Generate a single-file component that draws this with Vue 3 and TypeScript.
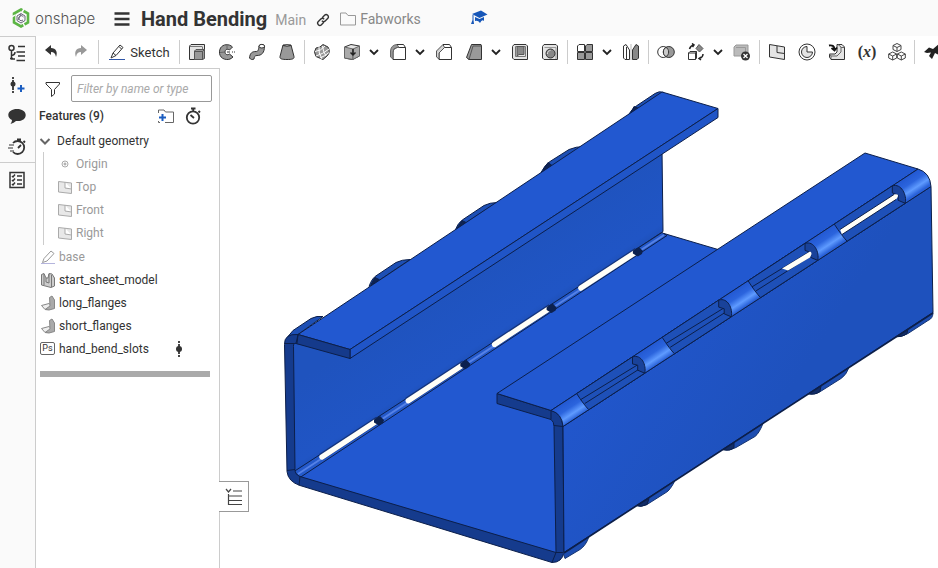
<script setup lang="ts">
import { ref } from 'vue'

interface Shape { d: string; f?: string; s?: string; w?: number }
type IconName = string

const K = '#333'
const G = '#999'
const L = '#e4e4e4'

const icons: Record<IconName, Shape[]> = {
  undo: [{ d: 'M3 7L9 2V5C14 5 16 9 14 14C13.500 10.500 12 9 9 9V12Z', f: K }],
  redo: [{ d: 'M15 7L9 2V5C4 5 2 9 4 14C4.500 10.500 6 9 9 9V12Z', f: G }],
  pencil: [
    { d: 'M3 15L5 10L12 2L15 4.500L8 12.500ZM5 10L8 12.500M11 3.500L13.500 6', s: K },
    { d: 'M1 16.500H17', s: '#2f56a8' },
  ],
  extrude: [
    { d: 'M1.500 3L3 1.500H16.500V15L15 16.500H1.500Z', f: L, s: K },
    { d: 'M1.500 3.500H14M14.500 3.500V6', s: '#777' },
    { d: 'M6.500 8L8 6.500H16.500V15L15 16.500H6.500Z', f: G, s: '#555' },
    { d: 'M6.500 8.500H14.500V16.500M14.500 8.500L16.500 6.500', s: '#555' },
  ],
  revolve: [
    { d: 'M14.500 4C11 .5 5 1 2.500 5C0 10 2 16 8.500 16.500C11 16.700 13 16 15 14L11.500 11C9.500 12.500 7 11.500 7 9C7 6.500 9.500 5.500 11.500 7Z', f: G, s: K },
    { d: 'M9 2L9 6M2 9.500L7 9', s: '#666' },
    { d: 'M9 9H12M14 9H15M16 9H17', s: K },
  ],
  sweep: [
    { d: 'M1.500 15C2 10 4 8.500 8 8.500C10 8.500 10.500 7.500 11 3C12 1 15 1 16.500 3C16.500 10 13.500 12.500 9 12.500C6.500 12.500 6.500 14 6 16C4.500 17 2.500 16.500 1.500 15Z', f: G, s: K },
    { d: 'M11 3.200A2.800 1.800 0 1 0 16.600 3.200A2.800 1.800 0 1 0 11 3.200', f: '#fff', s: K },
  ],
  loft: [
    { d: 'M5 2L2 13.500C1.500 16 4 16.500 9 16.500S16.500 16 16 13.500L13 2Z', f: G, s: K },
    { d: 'M5 2.500Q9 4 13 2.500Q9 1 5 2.500', f: '#fff', s: K },
  ],
  thicken: [
    { d: 'M3 5Q7 5 10 1.500L15 4Q18 9 14 13L10 16.500L3 13.500Q0 9 3 5Z', f: G, s: K },
    { d: 'M2 8.500Q8 8 12 3M3 13Q10 11 16 6M7 15Q12 13 16 9.500M6 4Q5 10 9 16M9.500 3Q10 9 13 13', s: '#fff', w: 1 },
  ],
  box: [
    { d: 'M1.500 4L8 1.500L16.500 3V13L9 16.500L1.500 15Z', f: L, s: K },
    { d: 'M1.500 4L10 6V16.500L1.500 15Z', f: '#aaa', s: '#666' },
    { d: 'M10 6L16.500 3V13L10 16.500Z', f: '#aaa', s: '#666' },
    { d: 'M10 6V12M7.500 9.500L10 12L12.500 9.500', s: '#222', w: 1.500 },
  ],
  fillet: [
    { d: 'M4 16.500V9Q4 5 8 4.500H16.500V16.500Z', f: '#fff', s: K },
    { d: 'M1.500 14V8Q2 2 8 1.500L10 4.500H8Q4 5 4 9V16Z', f: G, s: '#666' },
    { d: 'M8 1.500H14.500L16.500 4.500', s: K },
  ],
  chamfer: [
    { d: 'M4 16.500V10L9 4.500H16.500V16.500Z', f: '#fff', s: K },
    { d: 'M1.500 14V8L8 1.500L9.500 4.500L4 10V16Z', f: '#d5d5d5', s: '#555' },
    { d: 'M8 1.500H14.500L16.500 4.500', s: K },
  ],
  draft: [
    { d: 'M1.500 14.500L6.500 1.500H16L16.500 3V16.500H4Z', f: G, s: K },
    { d: 'M1.500 14.500L4 16.500L8 3H16.500', s: '#555' },
  ],
  shell: [
    { d: 'M1.500 3.500L3 1.500H15L16.500 3V16.500H3L1.500 15Z', f: L, s: K },
    { d: 'M4.500 3.500V13.500H14.500V3.500Z', s: '#777' },
    { d: 'M6 3.500H13V11.500H8L6 13Z', f: '#888', s: '#555' },
  ],
  hole: [
    { d: 'M1.500 3.500L3 1.500H15L16.500 3V16.500H3L1.500 15Z', f: L, s: K },
    { d: 'M3.500 4.500H15V16', s: '#999' },
    { d: 'M5 10.500A4.500 4.500 0 1 0 14 10.500A4.500 4.500 0 1 0 5 10.500', f: '#888', s: K },
    { d: 'M6.500 11A3 3 0 0 1 9.500 7.500', s: '#ddd' },
  ],
  pattern: [
    { d: 'M1.500 3L3 1.500H8.500V8.500H1.500Z', f: '#fff', s: K },
    { d: 'M9.500 3L11 1.500H16.500V8.500H9.500ZM1.500 9.500H8.500V16.500H1.500ZM9.500 9.500H16.500V16.500H9.500Z', f: G, s: K },
  ],
  mirror: [
    { d: 'M1.500 3L4 1.500L7.500 7V16.500H3L1.500 15Z', f: '#fff', s: K },
    { d: 'M4.500 4V16', s: K },
    { d: 'M16.500 3L14 1.500L10.500 7V16.500H15L16.500 15Z', f: '#888', s: K },
    { d: 'M9 1V17', s: '#bbb' },
  ],
  boolean: [
    { d: 'M.7 9A5.500 5.500 0 1 0 11.700 9A5.500 5.500 0 1 0 .7 9', f: '#fff', s: K },
    { d: 'M6.300 9A5.500 5.500 0 1 0 17.300 9A5.500 5.500 0 1 0 6.300 9', f: G, s: K },
    { d: 'M9 4.300A5.500 5.500 0 0 1 9 13.700A5.500 5.500 0 0 1 9 4.300', f: '#ccc', s: K },
  ],
  transform: [
    { d: 'M1.500 10L3 8.500H9.500V15L8.500 16.500H1.500ZM1.500 10H8.500V16.500M8.500 10L9.500 8.500', f: '#fff', s: K },
    { d: 'M12 1.500L16 5.500L12.500 9L9 5.500Z', f: '#888', s: '#555' },
    { d: 'M2.500 6Q3.500 2.500 7 2M5 .5L7 2L5.500 4M16 11Q16 14.500 12 15.500M14 14L12 15.500L14 17', s: '#222', w: 1.500 },
  ],
  remove: [
    { d: 'M1 4L3 2H15V13H1Z', f: '#bbb', s: G },
    { d: 'M3 4.500H12.500V13', s: '#999' },
    { d: 'M8 13A4.500 4.500 0 1 0 17 13A4.500 4.500 0 1 0 8 13', f: K },
    { d: 'M10.500 11L14.500 15M14.500 11L10.500 15', s: '#fff', w: 1.300 },
  ],
  plane: [
    { d: 'M1.500 1.500L16.500 4V16.500L1.500 14Z', f: L, s: K },
    { d: 'M9 3V9.500L16.500 10.500', s: K },
  ],
  helix: [
    { d: 'M1 9A8 8 0 1 0 17 9A8 8 0 1 0 1 9', f: '#fff', s: K },
    { d: 'M3.500 9A5.500 5.500 0 0 1 9 3.500V9H14.500A5.500 5.500 0 0 1 3.500 9', f: L, s: K },
  ],
  derive: [
    { d: 'M9 1.500H14L16.500 4V16.500H3L1.500 14V11H7L9 9Z', f: L, s: K },
    { d: 'M1.500 11L3 13H9L13 9V4L10 1.500M13 4.500H16.500M3 13V16', s: '#666' },
    { d: 'M1 2.500Q6 1.500 6.500 6M3.500 5L6.500 7.500L9 4.500', s: '#111', w: 1.800 },
  ],
  cubes: [
    { d: 'M9 .5L13 2.500V6.500L9 8.500L5 6.500V2.500ZM5 2.500L9 4.500L13 2.500M9 4.500V8.500', f: '#fff', s: '#444' },
    { d: 'M4.700 9L8.700 11V15L4.700 17L.7 15V11ZM.7 11L4.700 13L8.700 11M4.700 13V17', f: '#fff', s: '#444' },
    { d: 'M13.300 9L17.300 11V15L13.300 17L9.300 15V11ZM9.300 11L13.300 13L17.300 11M13.300 13V17', f: '#fff', s: '#444' },
  ],
  flange: [{ d: 'M1 9L6 4.500L10 6L16 1V8L18 10V13L12 10L9 16L6 13L8 9.500L4 10Z', f: '#222' }],
  tree: [
    { d: 'M1 4A2.500 2.500 0 1 0 6 4A2.500 2.500 0 1 0 1 4M3.500 7V15H7M3.500 11.500Q7 11 7 8M2 14.500H5', s: K, w: 1.500 },
    { d: 'M10 2.500H17M8.500 8H17M10 12H17M8.500 16.500H17', s: K, w: 1.600 },
  ],
  addStep: [
    { d: 'M5 1V3M5 4V14M5 15V17', s: K, w: 1.800 },
    { d: 'M2.500 8A2.500 2.500 0 1 0 7.500 8A2.500 2.500 0 1 0 2.500 8', f: K },
    { d: 'M13 9V16M9.500 12.500H16.500', s: '#1b5dc0', w: 2 },
  ],
  comment: [{ d: 'M9 2C4 2 .3 4.500 .3 8C.3 10.500 2 12 4 13Q4 15 2.500 17Q6 16 8 14C14 14.500 17.700 12 17.700 8C17.700 4.500 14 2 9 2Z', f: K }],
  watch: [
    { d: 'M5 5A6.500 6.500 0 1 1 5 14M9 1.500H13M11 2V4M15.500 3L17 4.500M10 10L13 7', s: K, w: 1.800 },
    { d: 'M1 7H6M0 10H5M2 13H6', s: K },
  ],
  checklist: [
    { d: 'M2 1.500H16V16.500H2Z', s: K, w: 1.500 },
    { d: 'M9 5H14M9 9H14M9 13H14M4 5L5 6L7 3.500M4 9L5 10L7 7.500M4 13L5 14L7 11.500', s: K, w: 1.500 },
  ],
  funnel: [{ d: 'M2 2.500H15.500V4L10.500 9.500V14L7.500 16.500V9.500L2 4Z', s: K }],
  addFolder: [
    { d: 'M1.500 6V3H7L8.500 5H16.500V15.500H8M1.500 14V15.500H3', s: '#666' },
    { d: 'M5.500 7V14M2 10.500H9', s: '#1b5dc0', w: 2 },
  ],
  timer: [{ d: 'M2.800 10.500A6.200 6.200 0 1 0 15.200 10.500A6.200 6.200 0 1 0 2.800 10.500M7 1.500H11.500M9.200 2V4M6.500 8L10 11M14.500 4L16 5.500', s: K, w: 1.800 }],
  chevron: [{ d: 'M5 7L9 11L13 7', s: '#222', w: 1.800 }],
  origin: [
    { d: 'M6 9A3 3 0 1 0 12 9A3 3 0 1 0 6 9', s: '#aaa' },
    { d: 'M7.500 9H10.500M9 7.500V10.500', s: G },
  ],
  datum: [{ d: 'M2.500 3.500L15.500 5V15.500L2.500 14ZM9 4V10L15.500 11', f: '#e8e8e8', s: '#aaa' }],
  sketchItem: [
    { d: 'M3.500 14.500L5 10.500L12 3L15 5.500L8 13Z', s: G },
    { d: 'M2 15.500H16', s: '#b5b5dd' },
  ],
  sheet: [
    { d: 'M2.500 3.500L5 2.500L7 7H9L10 2.500L13 3L15.500 7V15L12 16.500L2.500 14Z', f: '#ccc', s: '#777' },
    { d: 'M5 3V14M7 7V11L10 12V3M12.500 4V16', s: '#777' },
  ],
  bend: [
    { d: 'M2.500 11.500L10 9.500L14 13L9 15.500H6Z', f: '#eee', s: '#888' },
    { d: 'M10.500 3.500L13 2L15.500 6V14.500L10 16L6 15.500L11 12Z', f: '#aaa', s: '#888' },
  ],
  commit: [
    { d: 'M9 1V3M9 4V14M9 15V17', s: K, w: 1.800 },
    { d: 'M6 9A3 3 0 1 0 12 9A3 3 0 1 0 6 9', f: K },
  ],
  link: [{ d: 'M8 6L11 3Q13 1 15 3Q17 5 15 7L11.500 10.500Q9.500 12 7.500 10M10 12L7 15Q5 17 3 15Q1 13 3 11L6.500 7.500Q8.500 6 10.500 8', s: K, w: 1.800 }],
  folder: [{ d: 'M1.500 15V3H7L9 5.500H16.500V15Z', s: G }],
  cap: [
    { d: 'M2 5L11 1.500L17.500 5.500L9.500 9Z', f: '#1656b8' },
    { d: 'M5 8L9.500 10L14 8V12Q12 10 10 14Q8 11 5 12ZM2.500 6V11L1 15H4L3.500 11V6Z', f: '#1656b8' },
  ],
  listTab: [{ d: 'M1 1L3.500 4L6 1M3.500 6V17M4 8H17M4 12.500H17M4 16.500H17M8 3H17', s: '#444', w: 1.200 }],
  menu: [{ d: 'M1.500 3.500H16.500M1.500 9H16.500M1.500 14.500H16.500', s: K, w: 2.600 }],
}

interface Tool { icon: IconName; label: string; menu?: boolean }
const toolGroups: Tool[][] = [
  [
    { icon: 'extrude', label: 'Extrude' },
    { icon: 'revolve', label: 'Revolve' },
    { icon: 'sweep', label: 'Sweep' },
    { icon: 'loft', label: 'Loft' },
  ],
  [
    { icon: 'thicken', label: 'Thicken' },
    { icon: 'box', label: 'Enclose', menu: true },
    { icon: 'fillet', label: 'Fillet', menu: true },
    { icon: 'chamfer', label: 'Chamfer' },
    { icon: 'draft', label: 'Draft', menu: true },
    { icon: 'shell', label: 'Shell' },
    { icon: 'hole', label: 'Hole' },
  ],
  [
    { icon: 'pattern', label: 'Pattern', menu: true },
    { icon: 'mirror', label: 'Mirror' },
  ],
  [
    { icon: 'boolean', label: 'Boolean' },
    { icon: 'transform', label: 'Transform', menu: true },
    { icon: 'remove', label: 'Delete part' },
  ],
  [
    { icon: 'plane', label: 'Plane' },
    { icon: 'helix', label: 'Helix' },
    { icon: 'derive', label: 'Derived' },
    { icon: 'variable', label: 'Variable' },
    { icon: 'cubes', label: 'Composite part' },
  ],
  [{ icon: 'flange', label: 'Custom feature' }],
]

const rail: Tool[] = [
  { icon: 'tree', label: 'Feature list' },
  { icon: 'addStep', label: 'Versions and history' },
  { icon: 'comment', label: 'Comments' },
  { icon: 'watch', label: 'Performance' },
  { icon: 'checklist', label: 'Tasks' },
]

const defaults = [
  { icon: 'origin', name: 'Origin' },
  { icon: 'datum', name: 'Top' },
  { icon: 'datum', name: 'Front' },
  { icon: 'datum', name: 'Right' },
]
const features = [
  { icon: 'sketchItem', name: 'base', muted: true },
  { icon: 'sheet', name: 'start_sheet_model' },
  { icon: 'bend', name: 'long_flanges' },
  { icon: 'bend', name: 'short_flanges' },
  { icon: 'ps', name: 'hand_bend_slots', commit: true },
]
const open = ref(true)
const query = ref('')

/* Points on the two long edges of the outer bend, t running front to back. */
const top = (t: number) => [551 + 367 * t, 411 - 241.5 * t]
const low = (t: number) => [563 + 368 * t, 427 - 240 * t]
const p = (a: number[]) => `${a[0].toFixed(1)} ${a[1].toFixed(1)}`
const slots = [[0.07, 0.222], [0.303, 0.457], [0.537, 0.692], [0.772, 0.93]].map(([a, b], i) => {
  const s = top(a), e = top(b), f = low(b), g = low(a)
  return {
    body: `M${p(s)}L${p(e)}L${p(f)}L${p(g)}Q${p([g[0] - 5, g[1] - 5])} ${p(s)}Z`,
    lines: i === 3 ? '' : `M${p([s[0] + 4, s[1] + 6])}L${p([e[0] + 5, e[1] + 8])}M${p([s[0] + 8, s[1] + 10])}L${p([e[0] + 7, e[1] + 12])}`,
    cap: `M${p(e)}C${p([e[0] + 9, e[1] - 3])} ${p([f[0] + 2, f[1] - 8])} ${p(f)}L${p([f[0] - 7, f[1] - 3])}L${p([f[0] - 7, f[1] - 8])}L${p([e[0], e[1] + 7])}Z`,
  }
})

const innerSlots = [0, 1, 2, 3].map((i) => ({ x: 321 + 86.3 * i, y: 457.5 - 56.3 * i }))
const upperBumps = [
  'M288 337L293 331L311 319Q317 316 323 317L298 335Z',
  'M369 287Q372 278 378 275L396 263Q402 260 410 260L376 283Z',
  'M455 231Q458 223 463 220L484 206Q490 203 497 203L462 226Z',
  'M541 173Q545 165 550 162L569 150Q576 147 584 147L548 171Z',
  'M628 116Q632 109 637 106L655 94Q659 91 664 93L634 112Z',
]
const lowerBumps = [
  'M563 553L565 559L580 550Q586 546 589 537Z',
  'M636 506Q641 508 647 505L666 493Q670 491 675 481Z',
  'M722 450Q730 452 736 448L755 437Q759 434 763 424Z',
  'M807 394Q815 396 822 391L841 379Q846 376 849 368Z',
  'M894 337Q902 338 908 334L928 321Q933 319 933 313Z',
]
const bumpEnds = [
  'M371 285L375 278L379 280L376 283Z', 'M457 229L462 221L466 223L462 226Z',
  'M543 171L548 163L552 166L548 169Z', 'M630 115L634 107L639 109L635 112Z',
]
</script>

<template>
  <div class="app">
    <header class="header">
      <a class="brand" href="#" aria-label="onshape">
        <svg class="mark" viewBox="0 0 18 20" aria-hidden="true">
          <path d="M9 1.500L16 5.500V14.500L9 18.500L2 14.500V5.500Z" fill="none" stroke="#5cb545" stroke-width="2.600" />
          <path d="M0 9L3 7M12 1L10 4M13 19L11 15" stroke="#fafafa" stroke-width="1.500" />
          <path d="M9 5.500L13 8V12.500L9 15L5 12.500V8ZM6 12L9 6M11.500 9A2.500 2.500 0 1 0 11 12" fill="none" stroke="#667" />
        </svg>
        <span>onshape</span>
      </a>
      <button class="plain menu" aria-label="Menu">
        <svg class="icon" viewBox="0 0 18 18"><path v-for="(s, i) in icons.menu" :key="i" :d="s.d" :stroke="s.s" :stroke-width="s.w" /></svg>
      </button>
      <h1>Hand Bending</h1>
      <span class="branch">Main</span>
      <a class="link" href="#" aria-label="Copy link">
        <svg class="icon small" viewBox="0 0 18 18"><path v-for="(s, i) in icons.link" :key="i" :d="s.d" fill="none" :stroke="s.s" :stroke-width="s.w" /></svg>
      </a>
      <a class="folder" href="#">
        <svg class="icon" viewBox="0 0 18 18"><path v-for="(s, i) in icons.folder" :key="i" :d="s.d" fill="none" :stroke="s.s" /></svg>
        <span>Fabworks</span>
      </a>
      <a class="learn" href="#" aria-label="Learning center">
        <svg class="icon" viewBox="0 0 18 18"><path v-for="(s, i) in icons.cap" :key="i" :d="s.d" :fill="s.f" /></svg>
      </a>
    </header>

    <div class="workspace">
      <nav class="rail" aria-label="Panels">
        <button v-for="r in rail" :key="r.icon" class="plain" :class="r.icon" :aria-label="r.label">
          <svg class="icon" viewBox="0 0 18 18"><path v-for="(s, i) in icons[r.icon]" :key="i" :d="s.d" :fill="s.f ?? 'none'" :stroke="s.s" :stroke-width="s.w" /></svg>
        </button>
      </nav>

      <div class="main">
        <div class="toolbar" role="toolbar" aria-label="Modeling tools">
          <button v-for="n in ['undo', 'redo']" :key="n" class="plain tool" :aria-label="n">
            <svg class="icon" viewBox="0 0 18 18"><path v-for="(s, i) in icons[n]" :key="i" :d="s.d" :fill="s.f" /></svg>
          </button>
          <span class="divider" />
          <button class="plain sketch">
            <svg class="icon" viewBox="0 0 18 18"><path v-for="(s, i) in icons.pencil" :key="i" :d="s.d" fill="none" :stroke="s.s" /></svg>
            Sketch
          </button>
          <template v-for="(g, gi) in toolGroups" :key="gi">
            <span class="divider" />
            <template v-for="t in g" :key="t.icon">
              <button class="plain tool" :aria-label="t.label">
                <span v-if="t.icon === 'variable'" class="variable">(<i>x</i>)</span>
                <svg v-else class="icon" viewBox="0 0 18 18"><path v-for="(s, i) in icons[t.icon]" :key="i" :d="s.d" :fill="s.f ?? 'none'" :stroke="s.s" :stroke-width="s.w" /></svg>
              </button>
              <button v-if="t.menu" class="plain more" :aria-label="t.label + ' options'">
                <svg class="icon" viewBox="0 0 18 18"><path v-for="(s, i) in icons.chevron" :key="i" :d="s.d" fill="none" :stroke="s.s" :stroke-width="s.w" /></svg>
              </button>
            </template>
          </template>
        </div>

        <div class="stage">
          <aside class="panel">
            <div class="filter">
              <label for="filter" aria-label="Filter features">
                <svg class="icon" viewBox="0 0 18 18"><path v-for="(s, i) in icons.funnel" :key="i" :d="s.d" fill="none" :stroke="s.s" /></svg>
              </label>
              <input id="filter" v-model="query" type="text" placeholder="Filter by name or type">
            </div>
            <div class="heading">
              <h2>Features (9)</h2>
              <button v-for="n in ['addFolder', 'timer']" :key="n" class="plain" :aria-label="n">
                <svg class="icon" viewBox="0 0 18 18"><path v-for="(s, i) in icons[n]" :key="i" :d="s.d" fill="none" :stroke="s.s" :stroke-width="s.w" /></svg>
              </button>
            </div>
            <button class="plain group" :aria-expanded="open" @click="open = !open">
              <svg class="icon" viewBox="0 0 18 18"><path d="M4.500 7L9 11.500L13.500 7" fill="none" stroke="#666" stroke-width="2" /></svg>
              Default geometry
            </button>
            <ul v-if="open" class="children">
              <li v-for="d in defaults" :key="d.name" class="row muted">
                <svg class="icon" viewBox="0 0 18 18"><path v-for="(s, i) in icons[d.icon]" :key="i" :d="s.d" :fill="s.f ?? 'none'" :stroke="s.s" /></svg>
                {{ d.name }}
              </li>
            </ul>
            <ul class="list">
              <li v-for="f in features" :key="f.name" class="row" :class="{ muted: f.muted }">
                <span v-if="f.icon === 'ps'" class="ps">Ps</span>
                <svg v-else class="icon" viewBox="0 0 18 18"><path v-for="(s, i) in icons[f.icon]" :key="i" :d="s.d" :fill="s.f ?? 'none'" :stroke="s.s" /></svg>
                <span class="name">{{ f.name }}</span>
                <svg v-if="f.commit" class="icon commit" viewBox="0 0 18 18"><path v-for="(s, i) in icons.commit" :key="i" :d="s.d" :fill="s.f ?? 'none'" :stroke="s.s" :stroke-width="s.w" /></svg>
              </li>
            </ul>
            <div class="rollback" />
          </aside>

          <main class="viewport">
            <svg class="model" viewBox="220 69 718 499" role="img" aria-label="Sheet metal part">
              <defs>
                <linearGradient id="bend" gradientUnits="userSpaceOnUse" x1="551" y1="411" x2="562" y2="427.700">
                  <stop offset="0" stop-color="#2258d2" /><stop offset=".4" stop-color="#2b64dd" />
                  <stop offset=".72" stop-color="#5f9bff" /><stop offset="1" stop-color="#2860d8" />
                </linearGradient>
                <linearGradient id="web" gradientUnits="userSpaceOnUse" x1="580" y1="410" x2="720" y2="500">
                  <stop offset="0" stop-color="#2156cb" /><stop offset="1" stop-color="#1e51bd" />
                </linearGradient>
                <linearGradient id="inside" gradientUnits="userSpaceOnUse" x1="430" y1="295" x2="480" y2="371">
                  <stop offset="0" stop-color="#1f53be" /><stop offset=".75" stop-color="#2055c5" /><stop offset="1" stop-color="#1a48a5" />
                </linearGradient>
              </defs>
              <g stroke="#0c1f4a" stroke-linejoin="round" stroke-width="1">
                <path v-for="d in upperBumps" :key="d" :d="d" fill="#1d4fb5" />
                <path v-for="d in bumpEnds" :key="d" :d="d" fill="#0e2354" />
                <path d="M290 343L350 352L662 150L663 232L297 474L291 470Z" fill="url(#inside)" />
                <path d="M296 475L664 234L718 250L650 400L556 554L300 478Z" fill="#2258d0" />
                <path d="M294 472L662 233L667 236L300 478Z" fill="#2459ca" />
                <path d="M298 474.500L664 235.500" stroke="#5581e6" stroke-width="2" />
                <g v-for="s in innerSlots" :key="s.x">
                  <path :d="`M${s.x} ${s.y}l57 -37.200`" stroke="#15357d" stroke-width="7" />
                  <path :d="`M${s.x + 1} ${s.y}l54 -35.400`" stroke="#fffef8" stroke-width="5.400" stroke-linecap="round" />
                  <path :d="`M${s.x + 53} ${s.y - 37.500}l6 -3.500l4 4l-1 3l-4 2.500l-5 -3z`" fill="#0c214f" stroke="none" />
                </g>
                <path d="M298 335L662 92.500L718 109L350 350Z" fill="#2258d0" />
                <path d="M350 350L718 109V118L350 359Z" fill="#2055c7" />
                <path d="M298 335L350 350V359L296 344Z" fill="#153a8b" />
                <path d="M298 335Q284 334 284.500 345L287 472Q288 482 300 486L552 563Q562 563 564 553L563 427Q562 413 551 411L497 394V404L551 420Q554 422 554 427L556 553L300 477Q295 475 295 470L293.500 347Q293 343 297 344Z" fill="#153b8d" />
                <path d="M284.500 344H294M287 471L295 470M298 335L296 344M300 477L299 486M551 411V420M554 426L563 427M556 553L564 553M556 553L552 563" fill="none" />
                <path v-for="d in lowerBumps" :key="d" :d="d" fill="#1d4db0" stroke="#15336f" />
                <path d="M636 506Q641 508 647 505L649 499ZM722 450Q730 452 734 448V443ZM807 394Q815 396 820 392L821 386ZM894 337Q902 338 907 334L908 329Z" fill="#122d67" />
                <path d="M563 427L931 187L933 313L564 553Z" fill="url(#web)" />
                <path d="M564 553.500L933 313.500" stroke="#0c1f4a" stroke-width="1.500" />
                <path d="M497 394L865 153.500L918 169.500L551 411Z" fill="#2258d0" />
                <path d="M551 411L918 169.500Q930 173 931 187L563 427Q562 414 551 411Z" fill="url(#bend)" />
                <g v-for="s in slots" :key="s.body">
                  <path :d="s.body" fill="#1e50b8" />
                  <path v-if="s.lines" :d="s.lines" fill="none" />
                  <path :d="s.cap" fill="#19429a" />
                </g>
                <path d="M782 269L788 271L810 258Q813 253 810 252ZM840 230L842 235L896 200Q901 194 894 195Z" fill="#fffef8" stroke="none" />
                <path d="M840 230L894 195M842 235L896 200" fill="none" />
              </g>
            </svg>
            <button class="plain list-tab" aria-label="Toggle parts list">
              <svg class="icon" viewBox="0 0 18 18"><path v-for="(s, i) in icons.listTab" :key="i" :d="s.d" fill="none" :stroke="s.s" :stroke-width="s.w" /></svg>
            </button>
          </main>
        </div>
      </div>
    </div>
  </div>
</template>

<style>
body { margin: 0; background: #fff; }
</style>

<style scoped>
.app { display: flex; flex-direction: column; height: 100vh; overflow: hidden; font-family: Roboto, "Liberation Sans", sans-serif; font-size: 12px; color: #333; }
.plain { display: flex; align-items: center; justify-content: center; flex: none; padding: 0; border: 0; background: none; font: inherit; color: inherit; }
.icon { display: block; flex: none; width: 18px; height: 18px; }
.small { width: 14px; height: 14px; }
a { color: inherit; text-decoration: none; }
ul { margin: 0; padding: 0; list-style: none; }

.header { display: flex; align-items: center; flex: none; height: 36px; padding-left: 12px; background: #fafafa; }
.brand { display: flex; align-items: center; gap: 5px; width: 101px; font-family: Inter, Lato, sans-serif; font-size: 15px; font-weight: 300; color: #555; }
.mark { width: 18px; height: 20px; }
.menu { padding-top: 2px; }
h1 { margin: 0 8px 0 10px; padding-top: 2px; font-size: 20px; line-height: 34px; font-weight: 700; white-space: nowrap; }
.branch { padding-top: 4px; font-size: 14px; color: #999; }
.link { margin: 4px 9px 0 10px; }
.folder { display: flex; align-items: center; gap: 3px; padding-top: 2px; font-size: 14px; color: #888; }
.learn { margin-left: 49px; }

.workspace { display: flex; flex: 1; min-height: 0; }
.rail { display: flex; flex-direction: column; flex: none; width: 35px; border-right: 1px solid #ccc; background: #fafafa; }
.rail .plain { height: 31px; padding-right: 1px; }
.rail .tree { height: 33px; border-top: 1px solid #ccc; }
.rail .checklist { height: 34px; border-top: 1px solid #ccc; }
.main { display: flex; flex-direction: column; flex: 1; min-width: 0; }
.toolbar { display: flex; align-items: center; flex: none; height: 32px; overflow: hidden; }
.tool { width: 30px; height: 30px; }
.more { width: 16px; height: 30px; padding-right: 2px; }
.divider { flex: none; width: 1px; height: 24px; margin: 0 2px; background: #ccc; }
.sketch { gap: 4px; width: 76px; height: 30px; font-size: 13px; }
.variable { font: bold 16px "Liberation Serif", serif; }

.stage { display: flex; flex: 1; min-height: 0; }
.panel { flex: none; box-sizing: border-box; width: 184px; border: solid #ccc; border-width: 1px 1px 0 0; }
.filter { display: flex; align-items: center; gap: 9px; padding: 6px 7px 0 8px; }
.filter input { flex: 1; min-width: 0; box-sizing: border-box; height: 27px; padding: 0 5px; border: 1px solid #999; border-radius: 2px; background: #fff; font: inherit; color: #333; }
.filter input::placeholder { font-style: italic; color: #aaa; opacity: 1; }
.heading { display: flex; align-items: center; gap: 9px; height: 27px; padding: 0 17px 0 3px; }
h2 { flex: 1; margin: 0; font-size: 12px; font-weight: 500; }
.group { justify-content: flex-start; gap: 3px; width: 100%; height: 23px; }
.children { margin-left: 7px; padding-bottom: 1px; border-left: 1px solid #ccc; }
.children .row { padding-left: 12px; }
.row { display: flex; align-items: center; gap: 2px; height: 23px; padding-left: 3px; }
.list { padding-bottom: 1px; }
.muted { color: #999; }
.ps { box-sizing: border-box; width: 15px; height: 13px; margin: 0 2px 0 1px; border: 1px solid #666; border-radius: 2px; font-size: 9px; line-height: 11px; text-align: center; }
.name { width: 109px; }
.rollback { height: 6px; margin: 10px 9px 0 4px; background: #aaa; }

.viewport { position: relative; flex: 1; min-width: 0; }
.model { display: block; width: 100%; height: 100%; }
.list-tab { position: absolute; left: -1px; bottom: 56px; box-sizing: border-box; width: 30px; height: 31px; border: 1px solid #999; border-left: 0; background: #fff; }
</style>
